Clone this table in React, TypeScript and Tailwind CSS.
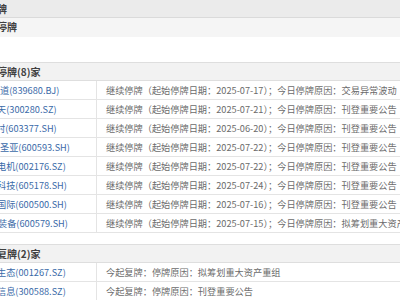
const font = {
  fontFamily: '"Microsoft YaHei", "Noto Sans CJK SC", "Noto Sans", sans-serif',
};

type Row = { name: string; cut: string; info: string };

const suspended: Row[] = [
  { name: "道(839680.BJ)", cut: "ml-0", info: "继续停牌（起始停牌日期：2025-07-17）；今日停牌原因：交易异常波动" },
  { name: "天(300280.SZ)", cut: "ml-[-3px]", info: "继续停牌（起始停牌日期：2025-07-21）；今日停牌原因：刊登重要公告" },
  { name: "村(603377.SH)", cut: "ml-[-4px]", info: "继续停牌（起始停牌日期：2025-06-20）；今日停牌原因：刊登重要公告" },
  { name: "圣亚(600593.SH)", cut: "ml-0", info: "继续停牌（起始停牌日期：2025-07-22）；今日停牌原因：刊登重要公告" },
  { name: "电机(002176.SZ)", cut: "ml-[-3px]", info: "继续停牌（起始停牌日期：2025-07-22）；今日停牌原因：刊登重要公告" },
  { name: "科技(605178.SH)", cut: "ml-[-3px]", info: "继续停牌（起始停牌日期：2025-07-24）；今日停牌原因：刊登重要公告" },
  { name: "国际(600500.SH)", cut: "ml-[-3px]", info: "继续停牌（起始停牌日期：2025-07-16）；今日停牌原因：刊登重要公告" },
  { name: "装备(600579.SH)", cut: "ml-[-2px]", info: "继续停牌（起始停牌日期：2025-07-15）；今日停牌原因：拟筹划重大资产重组" },
];

const resumed: Row[] = [
  { name: "生态(001267.SZ)", cut: "ml-[-3px]", info: "今起复牌：停牌原因：拟筹划重大资产重组" },
  { name: "信息(300588.SZ)", cut: "ml-[-3px]", info: "今起复牌：停牌原因：刊登重要公告" },
];

function DataRow({ row }: { row: Row }) {
  return (
    <div className="flex h-[19px] border-b border-[#e4e4e4] text-[9.2px] leading-[18px]">
      <div className="w-[97px] shrink-0 overflow-hidden whitespace-nowrap border-r border-[#e4e4e4] text-[#3a6aa8]">
        <span className={`inline-block ${row.cut}`}>{row.name}</span>
      </div>
      <div className="whitespace-nowrap pl-[9px] text-[#6b6b6b]">{row.info}</div>
    </div>
  );
}

function GroupHeader({ title, cut }: { title: string; cut: string }) {
  return (
    <div className="h-[19px] overflow-hidden whitespace-nowrap border-y border-[#dedede] bg-[#f2f2f2] text-[10px] font-semibold leading-[17px] text-[#404040]">
      <span className={`inline-block ${cut}`}>{title}</span>
    </div>
  );
}

export default function App() {
  return (
    <div className="h-[300px] w-[400px] overflow-hidden bg-white" style={font}>
      {/* Top title bars */}
      <div className="h-[18px] overflow-hidden whitespace-nowrap border-b border-[#dadada] bg-[#ebebeb] text-[10px] font-semibold leading-[17px] text-[#404040]">
        <span className="inline-block ml-[-3px]">牌</span>
      </div>
      <div className="h-[19px] overflow-hidden whitespace-nowrap bg-[#f5f5f5] text-[10px] font-semibold leading-[18px] text-[#404040]">
        <span className="inline-block ml-[-3px]">停牌</span>
      </div>
      <div className="h-[25px]" />

      <GroupHeader title="停牌(8)家" cut="ml-[-3px]" />
      {suspended.map((r) => (
        <DataRow key={r.name} row={r} />
      ))}

      <div className="h-[11px]" />

      <GroupHeader title="复牌(2)家" cut="ml-[-3px]" />
      {resumed.map((r) => (
        <DataRow key={r.name} row={r} />
      ))}
    </div>
  );
}
